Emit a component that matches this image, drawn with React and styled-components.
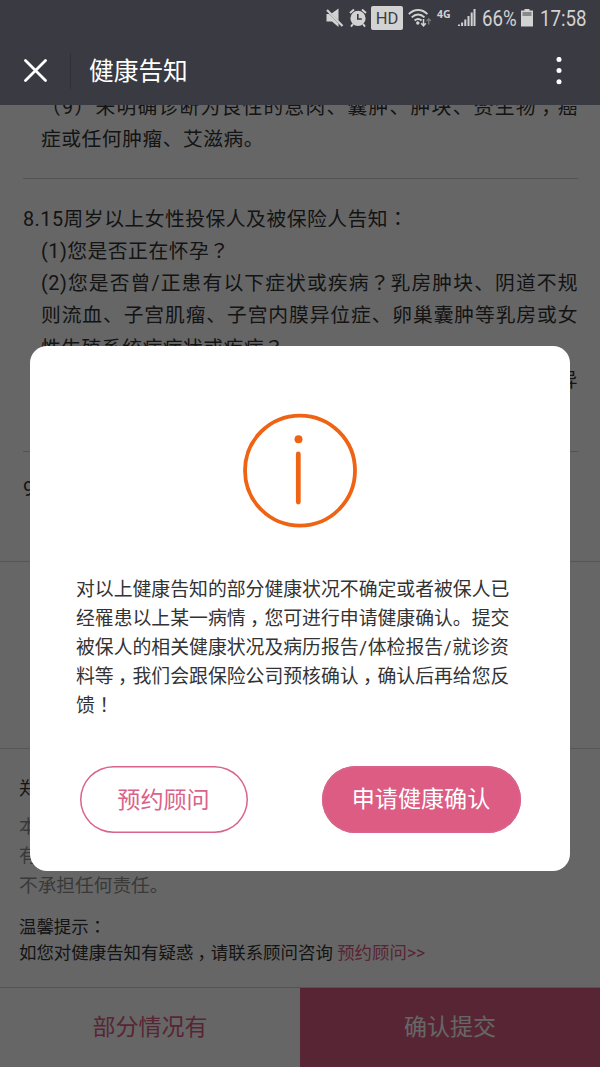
import React from 'react';
import styled, { createGlobalStyle } from 'styled-components';

const Global = createGlobalStyle`
  * { box-sizing: border-box; }
  body { margin: 0; background: #fff; }
  p, h1 { margin: 0; font-weight: 400; }
`;

const Screen = styled.div`
  width: 600px;
  height: 1067px;
  display: flex;
  flex-direction: column;
  overflow: hidden;
  font-family: Roboto, 'Noto Sans CJK SC', sans-serif;
  color: #333;
`;

const Header = styled.header`
  height: 105px;
  flex: none;
  background: #393a42;
`;

const StatusBar = styled.div`
  height: 36px;
  display: flex;
  align-items: center;
  justify-content: flex-end;
  padding-right: 14px;
  color: #d2d2d3;
`;

const StatusIcon = styled.svg`
  display: block;
  flex: none;
  margin-right: ${(p) => p.$gap}px;
`;

const HdBadge = styled.span`
  width: 32px;
  height: 24px;
  margin-right: 5px;
  border-radius: 2px;
  background: #d2d2d3;
  color: #3b3c43;
  font-size: 16.5px;
  line-height: 25px;
  text-align: center;
`;

const Network = styled.span`
  width: 14px;
  margin: 0 7px 8px 0;
  font: 700 10.5px/12px 'Noto Sans', sans-serif;
`;

const StatusText = styled.span`
  width: ${(p) => p.$width}px;
  margin-right: ${(p) => p.$gap || 0}px;
  font-size: 21.5px;
  line-height: 36px;
  padding-top: 2px;
  white-space: nowrap;
  transform: scaleX(0.87);
  transform-origin: left center;
`;

const NavBar = styled.nav`
  height: 69px;
  display: flex;
  align-items: center;
  padding: 0 38px 0 24px;
`;

const NavDivider = styled.span`
  width: 1px;
  height: 36px;
  margin: 0 18px 0 23px;
  background: #2f3036;
`;

const Title = styled.h1`
  flex: 1;
  padding-top: 2px;
  font-size: 24.7px;
  line-height: 36px;
  color: #fff;
`;

const Body = styled.main`
  position: relative;
  flex: 1;
  min-height: 0;
  display: flex;
  flex-direction: column;
`;

const Article = styled.section`
  height: 457px;
  flex: none;
  padding: 0 22px 0 23px;
  font-size: 19.8px;
  line-height: 32.2px;
  letter-spacing: 0.5px;
  border-bottom: 1px solid #d6d6d6;
  overflow: hidden;
`;

const Clause = styled.div`
  height: ${(p) => p.$height}px;
  padding-top: ${(p) => p.$top}px;
  border-bottom: ${(p) => (p.$last ? '0' : '1px solid #d0d0d0')};
  overflow: hidden;
`;

const Line = styled.p`
  height: 32.2px;
  margin-top: ${(p) => (p.$scrolled ? -13 : 0)}px;
  padding-left: ${(p) => (p.$indent ? 18 : 0)}px;
  white-space: nowrap;
  text-align-last: ${(p) => p.$align || 'left'};
`;

const Blank = styled.section`
  height: 187px;
  flex: none;
  border-bottom: 1px solid #d6d6d6;
`;

const Notes = styled.section`
  flex: 1;
  padding: 25px 19px 0;
`;

const Signer = styled.p`
  font-size: 18.7px;
  line-height: 30px;
  margin-bottom: 9px;
`;

const Disclaimer = styled.p`
  font-size: 18.7px;
  line-height: 29.4px;
  color: #8f8f8f;
`;

const Tips = styled.div`
  margin-top: 12.5px;
  font-size: 17.45px;
  line-height: 26px;
  white-space: nowrap;
`;

const TipLine = styled.p`
  height: 26px;
`;

const TipLink = styled.span`
  color: #dc5c84;
`;

const Footer = styled.footer`
  height: 80px;
  flex: none;
  display: flex;
  border-top: 1px solid #d0d0d0;
`;

const FooterButton = styled.button`
  flex: 1;
  padding: 0 0 6px;
  border: 0;
  font-family: inherit;
  font-size: 23px;
  color: ${(p) => (p.$primary ? '#fff' : '#dc5c84')};
  background: ${(p) => (p.$primary ? '#dc5c84' : '#fff')};
`;

const Mask = styled.div`
  position: absolute;
  inset: 0;
  display: flex;
  align-items: flex-start;
  justify-content: center;
  padding-top: 241px;
  background: rgba(0, 0, 0, 0.6);
`;

const Dialog = styled.div`
  width: 540px;
  height: 525px;
  display: flex;
  flex-direction: column;
  align-items: center;
  padding-top: 67px;
  border-radius: 17px;
  background: #fff;
`;

const Message = styled.div`
  width: 448px;
  height: 147px;
  margin-top: 46.5px;
  font-size: 18.85px;
  line-height: 29.2px;
  white-space: nowrap;
`;

const MessageLine = styled.p`
  height: 29.2px;
`;

const Actions = styled.div`
  width: 441px;
  display: flex;
  justify-content: space-between;
  margin-top: 43.5px;
`;

const PillButton = styled.button`
  width: ${(p) => (p.$primary ? 199 : 168)}px;
  height: 67px;
  padding: 0 0 ${(p) => (p.$primary ? 6 : 4)}px;
  border: 0;
  box-shadow: inset 0 0 0 1.5px #d9638a;
  border-radius: 34px;
  font-family: inherit;
  font-size: 23.1px;
  color: ${(p) => (p.$primary ? '#fff' : '#d9638a')};
  background: ${(p) => (p.$primary ? '#dc5c84' : '#fff')};
`;

const CommaGlyph = styled.span`
  padding: 0 0.27em 0 0.23em;
  font-family: 'Noto Sans CJK SC', sans-serif;
  font-feature-settings: 'halt';
  line-height: 0;
`;

const Centered = styled.span`
  font-family: 'Noto Sans CJK JP', sans-serif;
  line-height: 0;
`;

const SlashGlyph = styled.span`
  padding: 0 0.035em;
`;

const Comma = () => <CommaGlyph>，</CommaGlyph>;
const Slash = () => <SlashGlyph>/</SlashGlyph>;
const Mark = ({ children }) => <Centered lang="ja">{children}</Centered>;

const MuteIcon = () => (
  <StatusIcon $gap={5} width="18" height="20" viewBox="0 0 18 20">
    <path d="M.5 6h2.700l9.300 9.500V19L6 13.500H.5zM5.500 5.500l7-5v12z" fill="currentColor" />
    <path d="M1 2l15.500 16" stroke="currentColor" strokeWidth="2.200" />
  </StatusIcon>
);

const AlarmIcon = () => (
  <StatusIcon $gap={4} width="18" height="20" viewBox="0 0 18 20">
    <circle cx="9" cy="10.4" r="7.6" fill="currentColor" />
    <path d="M1 5l4-3.6M17 5l-4-3.6M4 16l-2 2.6M14 16l2 2.6" stroke="currentColor" strokeWidth="2" />
    <path d="M8.8 6v5h4" fill="none" stroke="#393a42" strokeWidth="1.6" />
  </StatusIcon>
);

const WifiIcon = () => (
  <StatusIcon $gap={5} width="24" height="20" viewBox="0 0 24 20">
    <g fill="none" stroke="currentColor" strokeWidth="1.9">
      <path d="M.8 6.2c5.4-5.6 13.2-5.6 18.6 0" />
      <path d="M3.7 9.4c3.8-3.8 9-3.8 12.8 0" />
      <path d="M6.6 12.5c2.2-2 4.8-2 7 0" />
    </g>
    <circle cx="9.8" cy="15" r="1.7" fill="currentColor" />
    <path d="M15.5 11v6.5M13.2 15.3l2.3 2.5 2.3-2.5" fill="none" stroke="currentColor" strokeWidth="1.5" />
    <path d="M20.7 16.5v-5.5M18.6 13l2.1-2.3L22.8 13" fill="none" stroke="#77787d" strokeWidth="1.4" />
  </StatusIcon>
);

const SignalIcon = () => (
  <StatusIcon $gap={6} width="18" height="20" viewBox="0 0 18 20">
    <path d="M0 16.5h2V18H0zM3.1 14.5h2V18h-2zM6.3 11.5h2V18h-2zM9.5 8h2v10h-2zM12.7 4.5h2V18h-2zM15.5 1h2v17h-2z" fill="currentColor" />
  </StatusIcon>
);

const BatteryIcon = () => (
  <StatusIcon $gap={7} width="12" height="20" viewBox="0 0 12 20">
    <path d="M3.5 1h5v1.5H12V18.5H0V2.5h3.5z" fill="currentColor" />
    <path d="M1.5 4h9v4h-9z" fill="#88898c" />
  </StatusIcon>
);

const CloseIcon = () => (
  <svg width="23" height="23" viewBox="0 0 23 23">
    <path d="M1.5 1.5l20 20M21.5 1.5l-20 20" stroke="#fff" strokeWidth="2.8" strokeLinecap="round" />
  </svg>
);

const MoreIcon = () => (
  <svg width="6" height="28" viewBox="0 0 6 28" fill="#fff">
    <circle cx="3" cy="2.4" r="2.5" />
    <circle cx="3" cy="13.5" r="2.5" />
    <circle cx="3" cy="24.7" r="2.5" />
  </svg>
);

const InfoDrawing = styled.svg`
  flex: none;
`;

const InfoIcon = () => (
  <InfoDrawing width="116" height="116" viewBox="0 0 116 116">
    <circle cx="58" cy="57.600" r="55" fill="none" stroke="#ee6314" strokeWidth="3.8" />
    <circle cx="56.5" cy="26.3" r="4" fill="#ee6314" />
    <path d="M56.3 41v48" stroke="#ee6314" strokeWidth="4.8" strokeLinecap="round" />
  </InfoDrawing>
);

export default function App() {
  return (
    <Screen lang="zh-CN">
      <Global />
      <Header>
        <StatusBar>
          <MuteIcon />
          <AlarmIcon />
          <HdBadge>HD</HdBadge>
          <WifiIcon />
          <Network>4G</Network>
          <SignalIcon />
          <StatusText $width={34} $gap={5}>66%</StatusText>
          <BatteryIcon />
          <StatusText $width={46}>17:58</StatusText>
        </StatusBar>
        <NavBar>
          <CloseIcon />
          <NavDivider />
          <Title>健康告知</Title>
          <MoreIcon />
        </NavBar>
      </Header>

      <Body>
        <Article>
          <Clause $height={74} $top={0}>
            <Line $indent $scrolled $align="justify">（9）未明确诊断为良性的息肉、囊肿、肿块、赘生物<Comma />癌</Line>
            <Line $indent>症或任何肿瘤、艾滋病。</Line>
          </Clause>
          <Clause $height={273} $top={24.8}>
            <Line>8.15周岁以上女性投保人及被保险人告知<Mark>：</Mark></Line>
            <Line $indent>(1)您是否正在怀孕<Mark>？</Mark></Line>
            <Line $indent $align="justify">(2)您是否曾/正患有以下症状或疾病<Mark>？</Mark>乳房肿块、阴道不规</Line>
            <Line $indent $align="justify">则流血、子宫肌瘤、子宫内膜异位症、卵巢囊肿等乳房或女</Line>
            <Line $indent>性生殖系统病症状或疾病<Mark>？</Mark></Line>
            <Line $align="right">异</Line>
          </Clause>
          <Clause $height={109} $top={22} $last>
            <Line>9</Line>
          </Clause>
        </Article>
        <Blank />
        <Notes>
          <Signer>郑</Signer>
          <Disclaimer>本<br />有<br />不承担任何责任。</Disclaimer>
          <Tips>
            <TipLine>温馨提示<Mark>：</Mark></TipLine>
            <TipLine>如您对健康告知有疑惑<Comma />请联系顾问咨询 <TipLink>预约顾问&gt;&gt;</TipLink></TipLine>
          </Tips>
        </Notes>
        <Footer>
          <FooterButton>部分情况有</FooterButton>
          <FooterButton $primary>确认提交</FooterButton>
        </Footer>

        <Mask>
          <Dialog role="dialog">
            <InfoIcon />
            <Message>
              <MessageLine>对以上健康告知的部分健康状况不确定或者被保人已</MessageLine>
              <MessageLine>经罹患以上某一病情<Comma />您可进行申请健康确认。提交</MessageLine>
              <MessageLine>被保人的相关健康状况及病历报告<Slash />体检报告<Slash />就诊资</MessageLine>
              <MessageLine>料等<Comma />我们会跟保险公司预核确认<Comma />确认后再给您反</MessageLine>
              <MessageLine>馈<Mark>！</Mark></MessageLine>
            </Message>
            <Actions>
              <PillButton>预约顾问</PillButton>
              <PillButton $primary>申请健康确认</PillButton>
            </Actions>
          </Dialog>
        </Mask>
      </Body>
    </Screen>
  );
}
